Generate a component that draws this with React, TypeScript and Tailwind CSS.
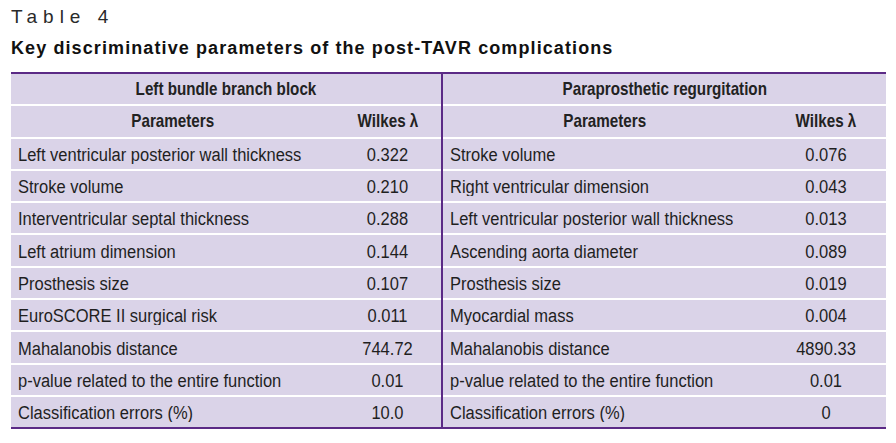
import React from "react";

const left: [string, string][] = [
  ["Left ventricular posterior wall thickness", "0.322"],
  ["Stroke volume", "0.210"],
  ["Interventricular septal thickness", "0.288"],
  ["Left atrium dimension", "0.144"],
  ["Prosthesis size", "0.107"],
  ["EuroSCORE II surgical risk", "0.011"],
  ["Mahalanobis distance", "744.72"],
  ["p-value related to the entire function", "0.01"],
  ["Classification errors (%)", "10.0"],
];

const right: [string, string][] = [
  ["Stroke volume", "0.076"],
  ["Right ventricular dimension", "0.043"],
  ["Left ventricular posterior wall thickness", "0.013"],
  ["Ascending aorta diameter", "0.089"],
  ["Prosthesis size", "0.019"],
  ["Myocardial mass", "0.004"],
  ["Mahalanobis distance", "4890.33"],
  ["p-value related to the entire function", "0.01"],
  ["Classification errors (%)", "0"],
];

function Head({ children }: { children: React.ReactNode }) {
  return (
    <span className="inline-block whitespace-nowrap text-[19px] font-bold scale-x-[0.8] text-[#222]">
      {children}
    </span>
  );
}

function Body({ children }: { children: React.ReactNode }) {
  return (
    <span className="inline-block whitespace-nowrap scale-y-[1.1] origin-left">{children}</span>
  );
}

function Half({
  title,
  rows,
  paramW,
}: {
  title: string;
  rows: [string, string][];
  paramW: string;
}) {
  return (
    <div className="flex flex-col gap-[2px] bg-white flex-1">
      <div className="h-[30.3px] bg-[#dad3e8] flex items-center justify-center">
        <Head>{title}</Head>
      </div>
      <div className="h-[30.3px] bg-[#dad3e8] flex items-center">
        <div className={`${paramW} text-center`}>
          <Head>Parameters</Head>
        </div>
        <div className="flex-1 text-center">
          <Head>Wilkes λ</Head>
        </div>
      </div>
      {rows.map(([p, v], i) => (
        <div key={i} className="h-[30.3px] bg-[#dad3e8] flex items-center">
          <div className={`${paramW} pl-[7px]`}>
            <Body>{p}</Body>
          </div>
          <div className="flex-1 text-center">
            <span className="inline-block scale-y-[1.1]">{v}</span>
          </div>
        </div>
      ))}
    </div>
  );
}

export default function App() {
  return (
    <div
      className="bg-white w-[896px] h-[443px] pl-[11px] text-[#1f1f1f]"
      style={{ fontFamily: '"Liberation Sans", Arial, sans-serif' }}
    >
      <div className="pt-[6px] text-[19px] leading-[22px] tracking-[6px] text-[#2a2a2a]">
        Table 4
      </div>
      <div className="mt-[9px] text-[18px] leading-[22px] font-bold tracking-[1.1px] text-[#111]">
        Key discriminative parameters of the post-TAVR complications
      </div>
      <div className="mt-[13px] w-[875px] border-t-2 border-b-2 border-[#5b2a86] flex text-[16.5px] leading-[20px]">
        <div className="w-[430px] flex">
          <Half title="Left bundle branch block" rows={left} paramW="w-[323px]" />
        </div>
        <div className="w-[2px] bg-[#5b2a86]" />
        <div className="flex-1 flex">
          <Half title="Paraprosthetic regurgitation" rows={right} paramW="w-[323px]" />
        </div>
      </div>
    </div>
  );
}
